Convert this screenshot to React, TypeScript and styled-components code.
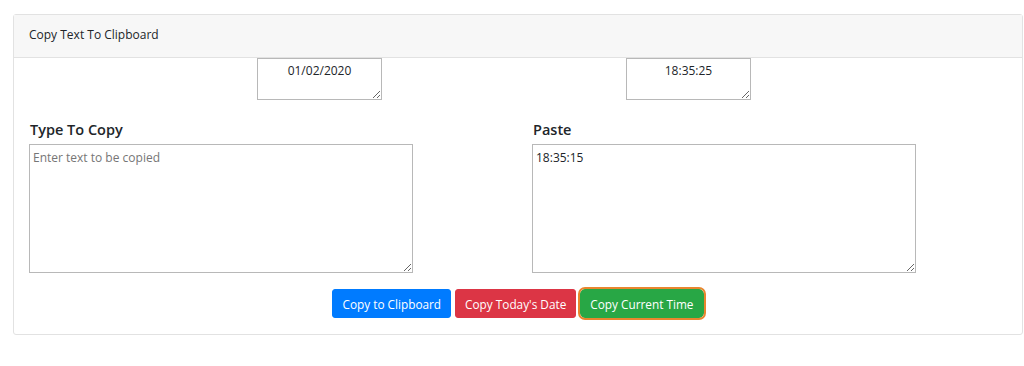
import React from "react";
import styled, { createGlobalStyle } from "styled-components";

const Global = createGlobalStyle`
  html, body { margin: 0; padding: 0; background: #fff; }
  body { font-family: "Open Sans", "Noto Sans", sans-serif; color: #212529; }
  * { box-sizing: border-box; }
`;

const Card = styled.div`
  margin: 14px 0 0 13px;
  width: 1010px;
  border: 1px solid #e2e2e2;
  border-radius: 3px;
  background: #fff;
`;

const Header = styled.div`
  height: 43px;
  display: flex;
  align-items: center;
  padding: 0 15px 4px;
  background: #f7f7f7;
  border-bottom: 1px solid #e2e2e2;
  font-size: 12px;
  color: #212529;
`;

const Body = styled.div`
  padding: 0 15px 16px;
`;

const SmallRow = styled.div`
  display: flex;
  gap: 244px;
  padding-left: 228px;
`;

const SmallBox = styled.textarea`
  width: 125px;
  height: 42px;
  border: 1px solid #b8b8b8;
  border-radius: 0;
  padding: 3px 4px;
  text-align: center;
  font-family: "Open Sans", "Noto Sans", sans-serif;
  font-size: 12px;
  color: #212529;
  background: #fff;
  resize: both;
  outline: none;
`;

const Columns = styled.div`
  display: grid;
  grid-template-columns: 384px 384px;
  column-gap: 119px;
  margin-top: 20px;
`;

const Field = styled.div`
  display: flex;
  flex-direction: column;
`;

const Label = styled.label`
  font-size: 14.5px;
  font-weight: 600;
  color: #212529;
  line-height: 20px;
  margin-bottom: 4px;
  padding-left: 1px;
`;

const BigBox = styled.textarea`
  width: 384px;
  height: 129px;
  border: 1px solid #b8b8b8;
  border-radius: 0;
  padding: 4px 3px;
  font-family: "Open Sans", "Noto Sans", sans-serif;
  font-size: 12px;
  color: #212529;
  background: #fff;
  outline: none;
  &::placeholder { color: #767676; }
`;

const Buttons = styled.div`
  display: flex;
  justify-content: center;
  gap: 4px;
  margin-top: 16px;
`;

const Button = styled.button<{ $bg: string; $focus?: boolean }>`
  height: 29px;
  padding: 0 9px;
  border: 1px solid ${(p) => p.$bg};
  border-radius: 3px;
  background: ${(p) => p.$bg};
  color: #fff;
  font-family: "Open Sans", "Noto Sans", sans-serif;
  font-size: 11.8px;
  cursor: pointer;
  ${(p) =>
    p.$focus
      ? "outline: 2px solid #e8862e; outline-offset: 0px; border-radius: 5px;"
      : "outline: none;"}
`;

export default function App() {
  return (
    <>
      <Global />
      <Card>
        <Header>Copy Text To Clipboard</Header>
        <Body>
          <SmallRow>
            <SmallBox readOnly defaultValue="01/02/2020" />
            <SmallBox readOnly defaultValue="18:35:25" />
          </SmallRow>
          <Columns>
            <Field>
              <Label>Type To Copy</Label>
              <BigBox placeholder="Enter text to be copied" />
            </Field>
            <Field>
              <Label>Paste</Label>
              <BigBox defaultValue="18:35:15" />
            </Field>
          </Columns>
          <Buttons>
            <Button $bg="#007bff">Copy to Clipboard</Button>
            <Button $bg="#dc3545">Copy Today's Date</Button>
            <Button $bg="#28a745" $focus>Copy Current Time</Button>
          </Buttons>
        </Body>
      </Card>
    </>
  );
}
